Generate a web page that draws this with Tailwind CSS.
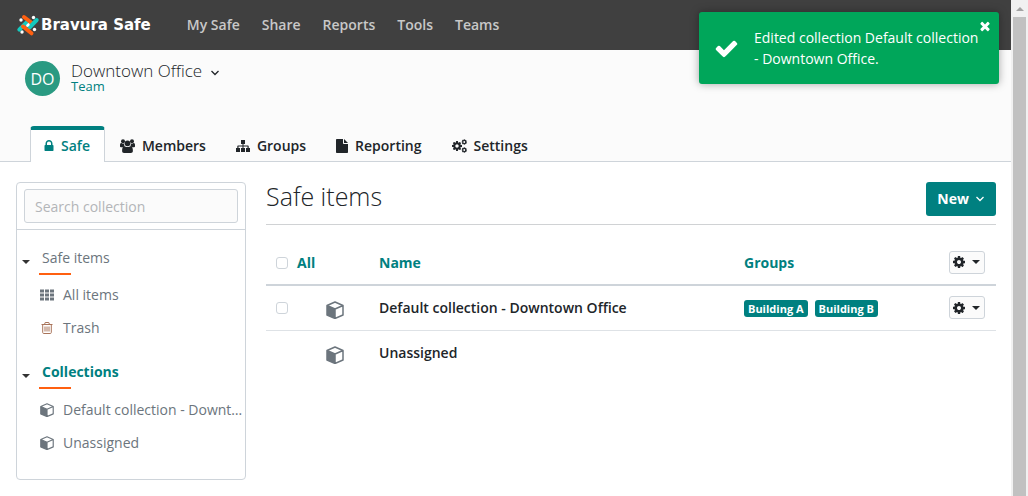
<!DOCTYPE html>
<html lang="en">
<head>
<meta charset="utf-8">
<meta name="viewport" content="width=device-width, initial-scale=1">
<title>Bravura Safe</title>
<script src="https://cdn.jsdelivr.net/npm/@tailwindcss/browser@4"></script>
</head>
<body class="flex h-screen overflow-hidden bg-white font-['Open_Sans',sans-serif] text-sm text-[#212529]">
<svg class="hidden" aria-hidden="true">
  <symbol id="lock" viewBox="0 0 1792 1792"><path d="M640 768h512v-192q0-106-75-181t-181-75-181 75-75 181v192zm832 96v576q0 40-28 68t-68 28h-960q-40 0-68-28t-28-68v-576q0-40 28-68t68-28h32v-192q0-184 132-316t316-132 316 132 132 316v192h32q40 0 68 28t28 68z"/></symbol>
  <symbol id="check" viewBox="0 0 1792 1792"><path d="M1671 566q0 40-28 68l-724 724-136 136q-28 28-68 28t-68-28l-136-136-362-362q-28-28-28-68t28-68l136-136q28-28 68-28t68 28l294 295 656-657q28-28 68-28t68 28l136 136q28 28 28 68z"/></symbol>
  <symbol id="times" viewBox="0 0 1792 1792"><path d="M1490 1322q0 40-28 68l-136 136q-28 28-68 28t-68-28l-294-294-294 294q-28 28-68 28t-68-28l-136-136q-28-28-28-68t28-68l294-294-294-294q-28-28-28-68t28-68l136-136q28-28 68-28t68 28l294 294 294-294q28-28 68-28t68 28l136 136q28 28 28 68t-28 68l-294 294 294 294q28 28 28 68z"/></symbol>
  <symbol id="cog" viewBox="128 128 1536 1536"><path d="M1152 896q0-106-75-181t-181-75-181 75-75 181 75 181 181 75 181-75 75-181zm512-109v222q0 12-8 23t-20 13l-185 28q-19 54-39 91 35 50 107 138 10 12 10 25t-9 23q-27 37-99 108t-94 71q-12 0-26-9l-138-108q-44 23-91 38-16 136-29 186-7 28-36 28h-222q-14 0-24.500-8.500t-11.500-21.500l-28-184q-49-16-90-37l-141 107q-10 9-25 9-14 0-25-11-126-114-165-168-7-10-7-23 0-12 8-23 15-21 51-66.500t54-70.500q-27-50-41-99l-183-27q-13-2-21-12.500t-8-23.500v-222q0-12 8-23t19-13l186-28q14-46 39-92-40-57-107-138-10-12-10-24 0-10 9-23 26-36 98.500-107.500t94.500-71.500q13 0 26 10l138 107q44-23 91-38 16-136 29-186 7-28 36-28h222q14 0 24.500 8.500t11.500 21.500l28 184q49 16 90 37l142-107q9-9 24-9 13 0 25 10 129 119 165 170 7 8 7 22 0 12-8 23-15 21-51 66.500t-54 70.500q26 50 41 98l183 28q13 2 21 12.500t8 23.500z"/></symbol>
  <symbol id="cube" viewBox="0 0 18 18"><path d="M1 4.500 9 8v9.500L1 14z"/><path d="M9 1 17 4.500V14L9 17.500 1 14V4.500zM1 4.500 9 8l8-3.500M9 8v9.500" fill="none" stroke="currentColor" stroke-width="1.500" stroke-linejoin="round"/></symbol>
  <symbol id="chev" viewBox="0 0 10 10"><path d="m1.500 3 3.500 3.500L8.500 3" fill="none" stroke="currentColor" stroke-width="1.300"/></symbol>
  <symbol id="caret" viewBox="0 0 8 4"><path d="M0 0h8L4 4z"/></symbol>
</svg>

<div class="min-w-0 flex-1">
  <header class="flex h-[50px] items-center bg-[#404040] pl-4">
    <a href="#" class="flex items-center gap-px text-white">
      <svg class="size-6" viewBox="0 0 24 24" aria-hidden="true">
        <g fill="#fff"><circle cx="5" cy="7" r="1.700"/><circle cx="17.500" cy="4.500" r="1.700"/><circle cx="6" cy="19" r="1.700"/><circle cx="18.500" cy="16.500" r="1.700"/><circle cx="12" cy="12" r="2.200"/></g>
        <g fill="none" stroke-width="4" stroke-linecap="round">
          <path d="m3.300 16.700 7.500-7.500" stroke="#14cabf"/>
          <path d="m8 4 8.500 6.500" stroke="#ff6010"/>
          <path d="M20.700 7 13.500 14.500" stroke="#14cabf"/>
          <path d="m7 13.500 8.500 6.800" stroke="#ff6010"/>
        </g>
        <circle cx="12" cy="12" r="1.500" fill="#fff"/>
      </svg>
      <span class="pt-0.5 font-['DejaVu_Sans',sans-serif] text-[15px] font-bold">Bravura Safe</span>
    </a>
    <nav class="ml-9 flex gap-[22px] font-semibold text-[#c8c8c8]">
      <a href="#">My Safe</a><a href="#">Share</a><a href="#">Reports</a><a href="#">Tools</a><a href="#">Teams</a>
    </nav>
  </header>

  <section class="flex h-28 flex-col justify-between border-b border-[#ced4da] bg-[#fbfbfb]">
    <div class="flex items-start gap-[11px] pt-[11px] pl-[25px]">
      <span class="flex size-[35px] items-center justify-center rounded-full bg-[#2a9a82] text-base text-white">DO</span>
      <div>
        <button type="button" class="flex items-center gap-2 text-[17px] leading-5 font-light text-[#212529]">Downtown Office <svg class="mt-1 size-[10px]" aria-hidden="true"><use href="#chev"/></svg></button>
        <p class="text-[13px] leading-[11px] text-[#008080]">Team</p>
      </div>
    </div>
    <nav class="-mb-px flex pl-[30px] font-semibold">
      <a href="#" class="flex h-9 items-center gap-[5px] rounded-t border-x border-t-4 border-x-[#ced4da] border-t-[#008080] bg-white pr-[14px] pl-[11px] text-[#008080]"><svg class="size-[14px] fill-current" aria-hidden="true"><use href="#lock"/></svg>Safe</a>
      <a href="#" class="flex h-9 items-center gap-[7px] pt-1 pl-[15px]"><svg class="h-[14px] w-[15px] fill-current" viewBox="0 0 15 14" aria-hidden="true"><circle cx="3" cy="2.200" r="2"/><circle cx="12" cy="2.200" r="2"/><circle cx="7.500" cy="4.300" r="2.900"/><path d="M0 7.500V6c0-1.500.7-2 1.500-2 .8.700 1.900.8 2.500.5C4 5.800 4.300 6.500 4.700 7.200c-1 0-1.700.5-2.200 1H1C.4 8.200 0 8 0 7.500zM15 7.500V6c0-1.500-.7-2-1.500-2-.8.700-1.900.8-2.500.5 0 1.300-.3 2-.7 2.700 1 0 1.700.5 2.200 1H14c.6 0 1-.2 1-.7zM2.100 12c0-3 .7-4.800 2.400-4.800 1 1 4.800 1 6 0 1.700 0 2.400 1.800 2.400 4.800 0 1.200-.8 2-2 2H4c-1.200 0-1.900-.8-1.900-2z"/></svg>Members</a>
      <a href="#" class="flex h-9 items-center gap-[7px] pt-1 pl-[30px]"><svg class="size-[14px] fill-current" viewBox="0 0 14 14" aria-hidden="true"><path d="M5 1h4v4H7.500v1.500H12c.4 0 .7.300.7.700V9H14v4h-4V9h1.500V7.500h-4V9H9v4H5V9h1.500V7.500h-4V9H4v4H0V9h1.300V7.200c0-.4.300-.7.700-.7h4.500V5H5z"/></svg>Groups</a>
      <a href="#" class="flex h-9 items-center gap-[7px] pt-1 pl-[30px]"><svg class="h-[14px] w-3 fill-current" viewBox="0 0 12 14" aria-hidden="true"><path d="M.8 0H7v4.200c0 .5.300.8.800.8H12v8.200c0 .5-.3.800-.8.800H.8c-.5 0-.8-.3-.8-.8V.8C0 .3.300 0 .8 0zM8 0l4 4H8z"/></svg>Reporting</a>
      <a href="#" class="flex h-9 items-center gap-[7px] pt-1 pl-[30px]"><svg class="h-[14px] w-[15px] fill-current" viewBox="0 0 15 14" aria-hidden="true"><use href="#cog" x="0" y="2" width="10" height="10"/><use href="#cog" x="9.500" y="0" width="5.500" height="6"/><use href="#cog" x="9.500" y="8" width="5.500" height="6"/></svg>Settings</a>
    </nav>
  </section>

  <main class="flex items-start gap-5 pt-5 pr-[15px] pl-4">
    <aside class="w-[230px] shrink-0 rounded border border-[#ced4da] pb-5 text-[#6c757d]">
      <div class="border-b border-[#ced4da] px-[7px] py-1.5">
        <input type="text" aria-label="Search collection" placeholder="Search collection" class="block h-[34px] w-full rounded-[3px] border border-[#ced4da] bg-[#fbfbfb] px-2.5 placeholder:text-[#b3b5b8]">
      </div>
      <div class="pt-[17px] pl-[5px]">
        <button type="button" class="flex items-center gap-3 leading-[22px]"><svg class="mt-2 h-1 w-2 fill-[#333]" aria-hidden="true"><use href="#caret"/></svg>Safe items</button>
        <div class="mt-1 ml-[17px] h-0.5 w-8 bg-[#ff6010]"></div>
      </div>
      <ul class="pt-[3px] pl-[23px] leading-[33px]">
        <li><a href="#" class="flex items-center gap-[9px]"><svg class="size-[14px] fill-current" viewBox="0 0 14 14" aria-hidden="true"><path d="M0 1.500h4v3H0zM5 1.500h4v3H5zM10 1.500h4v3h-4zM0 5.500h4v3H0zM5 5.500h4v3H5zM10 5.500h4v3h-4zM0 9.500h4v3H0zM5 9.500h4v3H5zM10 9.500h4v3h-4z"/></svg>All items</a></li>
        <li><a href="#" class="flex items-center gap-[9px]"><svg class="size-[14px]" viewBox="0 0 14 14" fill="none" stroke="#a9745a" aria-hidden="true"><path d="M1.500 3.500h11M4.500 3.500l.7-2h3.600l.7 2M2.700 3.500v8c0 .6.400 1 1 1h6.600c.6 0 1-.4 1-1v-8M5 5.500v5M7 5.500v5M9 5.500v5"/></svg>Trash</a></li>
      </ul>
      <div class="pt-[17px] pl-[5px]">
        <button type="button" class="flex items-center gap-3 leading-[22px] font-bold text-[#008080]"><svg class="mt-2 h-1 w-2 fill-[#333]" aria-hidden="true"><use href="#caret"/></svg>Collections</button>
        <div class="mt-1 ml-[17px] h-0.5 w-8 bg-[#ff6010]"></div>
      </div>
      <ul class="pt-1 pr-0.5 pl-[23px] leading-[33px]">
        <li><a href="#" class="flex items-center gap-[9px]"><svg class="size-[14px] shrink-0 fill-current" aria-hidden="true"><use href="#cube"/></svg><span class="truncate">Default collection - Downtown Office</span></a></li>
        <li><a href="#" class="flex items-center gap-[9px]"><svg class="size-[14px] shrink-0 fill-current" aria-hidden="true"><use href="#cube"/></svg>Unassigned</a></li>
      </ul>
    </aside>

    <div class="min-w-0 flex-1">
      <div class="flex items-start justify-between border-b border-[#d0d2d4] pb-2">
        <h1 class="text-[25px] leading-7 font-light text-[#212529]">Safe items</h1>
        <button type="button" class="flex h-[34px] items-center gap-1.5 rounded-[3px] bg-[#008080] px-[11px] font-bold text-white">New <svg class="size-[10px]" aria-hidden="true"><use href="#chev"/></svg></button>
      </div>
      <table class="mt-[15px] w-full table-fixed border-collapse text-left">
        <colgroup><col class="w-[60px]"><col class="w-[53px]"><col class="w-1/2"><col><col class="w-[47px]"></colgroup>
        <thead class="text-[#008080]">
          <tr class="h-[45px] border-b-2 border-[#ced4da]">
            <th class="pt-0.5 pl-2.5"><label class="flex items-center gap-[9px]"><input type="checkbox" class="size-3 appearance-none rounded-[3px] border border-[#ced4da] bg-white">All</label></th>
            <th></th>
            <th class="pt-0.5">Name</th>
            <th class="pt-0.5">Groups</th>
            <th><button type="button" aria-label="Options" class="flex h-[23px] w-9 items-center gap-[7px] rounded-[3px] border border-[#ced4da] bg-[#fbfbfb] pl-[3px] text-[#212529]"><svg class="size-3 fill-current" aria-hidden="true"><use href="#cog"/></svg><svg class="h-1 w-2 fill-current" aria-hidden="true"><use href="#caret"/></svg></button></th>
          </tr>
        </thead>
        <tbody>
          <tr class="h-[45px] border-b border-[#dee2e6]">
            <td class="pl-2.5"><input type="checkbox" aria-label="Select Default collection - Downtown Office" class="block size-3 appearance-none rounded-[3px] border border-[#ced4da] bg-white"></td>
            <td><svg class="mt-1 size-[18px] fill-current text-[#6c757d]" aria-hidden="true"><use href="#cube"/></svg></td>
            <td class="font-semibold">Default collection - Downtown Office</td>
            <td><div class="flex gap-[7px] pt-0.5 text-[11px] leading-[17px] font-bold text-white"><span class="rounded-[3px] bg-[#008080] px-1">Building A</span><span class="rounded-[3px] bg-[#008080] px-1">Building B</span></div></td>
            <td><button type="button" aria-label="Options" class="flex h-[23px] w-9 items-center gap-[7px] rounded-[3px] border border-[#ced4da] bg-[#fbfbfb] pl-[3px]"><svg class="size-3 fill-current" aria-hidden="true"><use href="#cog"/></svg><svg class="h-1 w-2 fill-current" aria-hidden="true"><use href="#caret"/></svg></button></td>
          </tr>
          <tr class="h-[45px]">
            <td></td>
            <td><svg class="mt-1 size-[18px] fill-current text-[#6c757d]" aria-hidden="true"><use href="#cube"/></svg></td>
            <td class="font-semibold">Unassigned</td>
            <td></td>
            <td></td>
          </tr>
        </tbody>
      </table>
    </div>
  </main>
</div>

<div class="flex w-[17px] shrink-0 flex-col items-center bg-[#f1f1f1]" aria-hidden="true">
  <div class="flex h-[17px] items-center"><svg class="h-1 w-2 rotate-180 fill-[#a3a3a3]"><use href="#caret"/></svg></div>
  <div class="w-[13px] flex-1 bg-[#c1c1c1]"></div>
</div>

<div role="alert" class="absolute top-3 right-[29px] flex w-[300px] items-center rounded-[3px] bg-[#00a65a] py-[15px] pl-[15px] text-white shadow-[0_0_8px_rgba(0,0,0,0.35)]">
  <svg class="size-[25px] fill-current" aria-hidden="true"><use href="#check"/></svg>
  <p class="ml-[15px] leading-[21px]">Edited collection Default collection<br>- Downtown Office.</p>
  <button type="button" aria-label="Close" class="absolute top-[7px] right-[7px]"><svg class="size-[14px] fill-current" aria-hidden="true"><use href="#times"/></svg></button>
</div>
</body>
</html>
